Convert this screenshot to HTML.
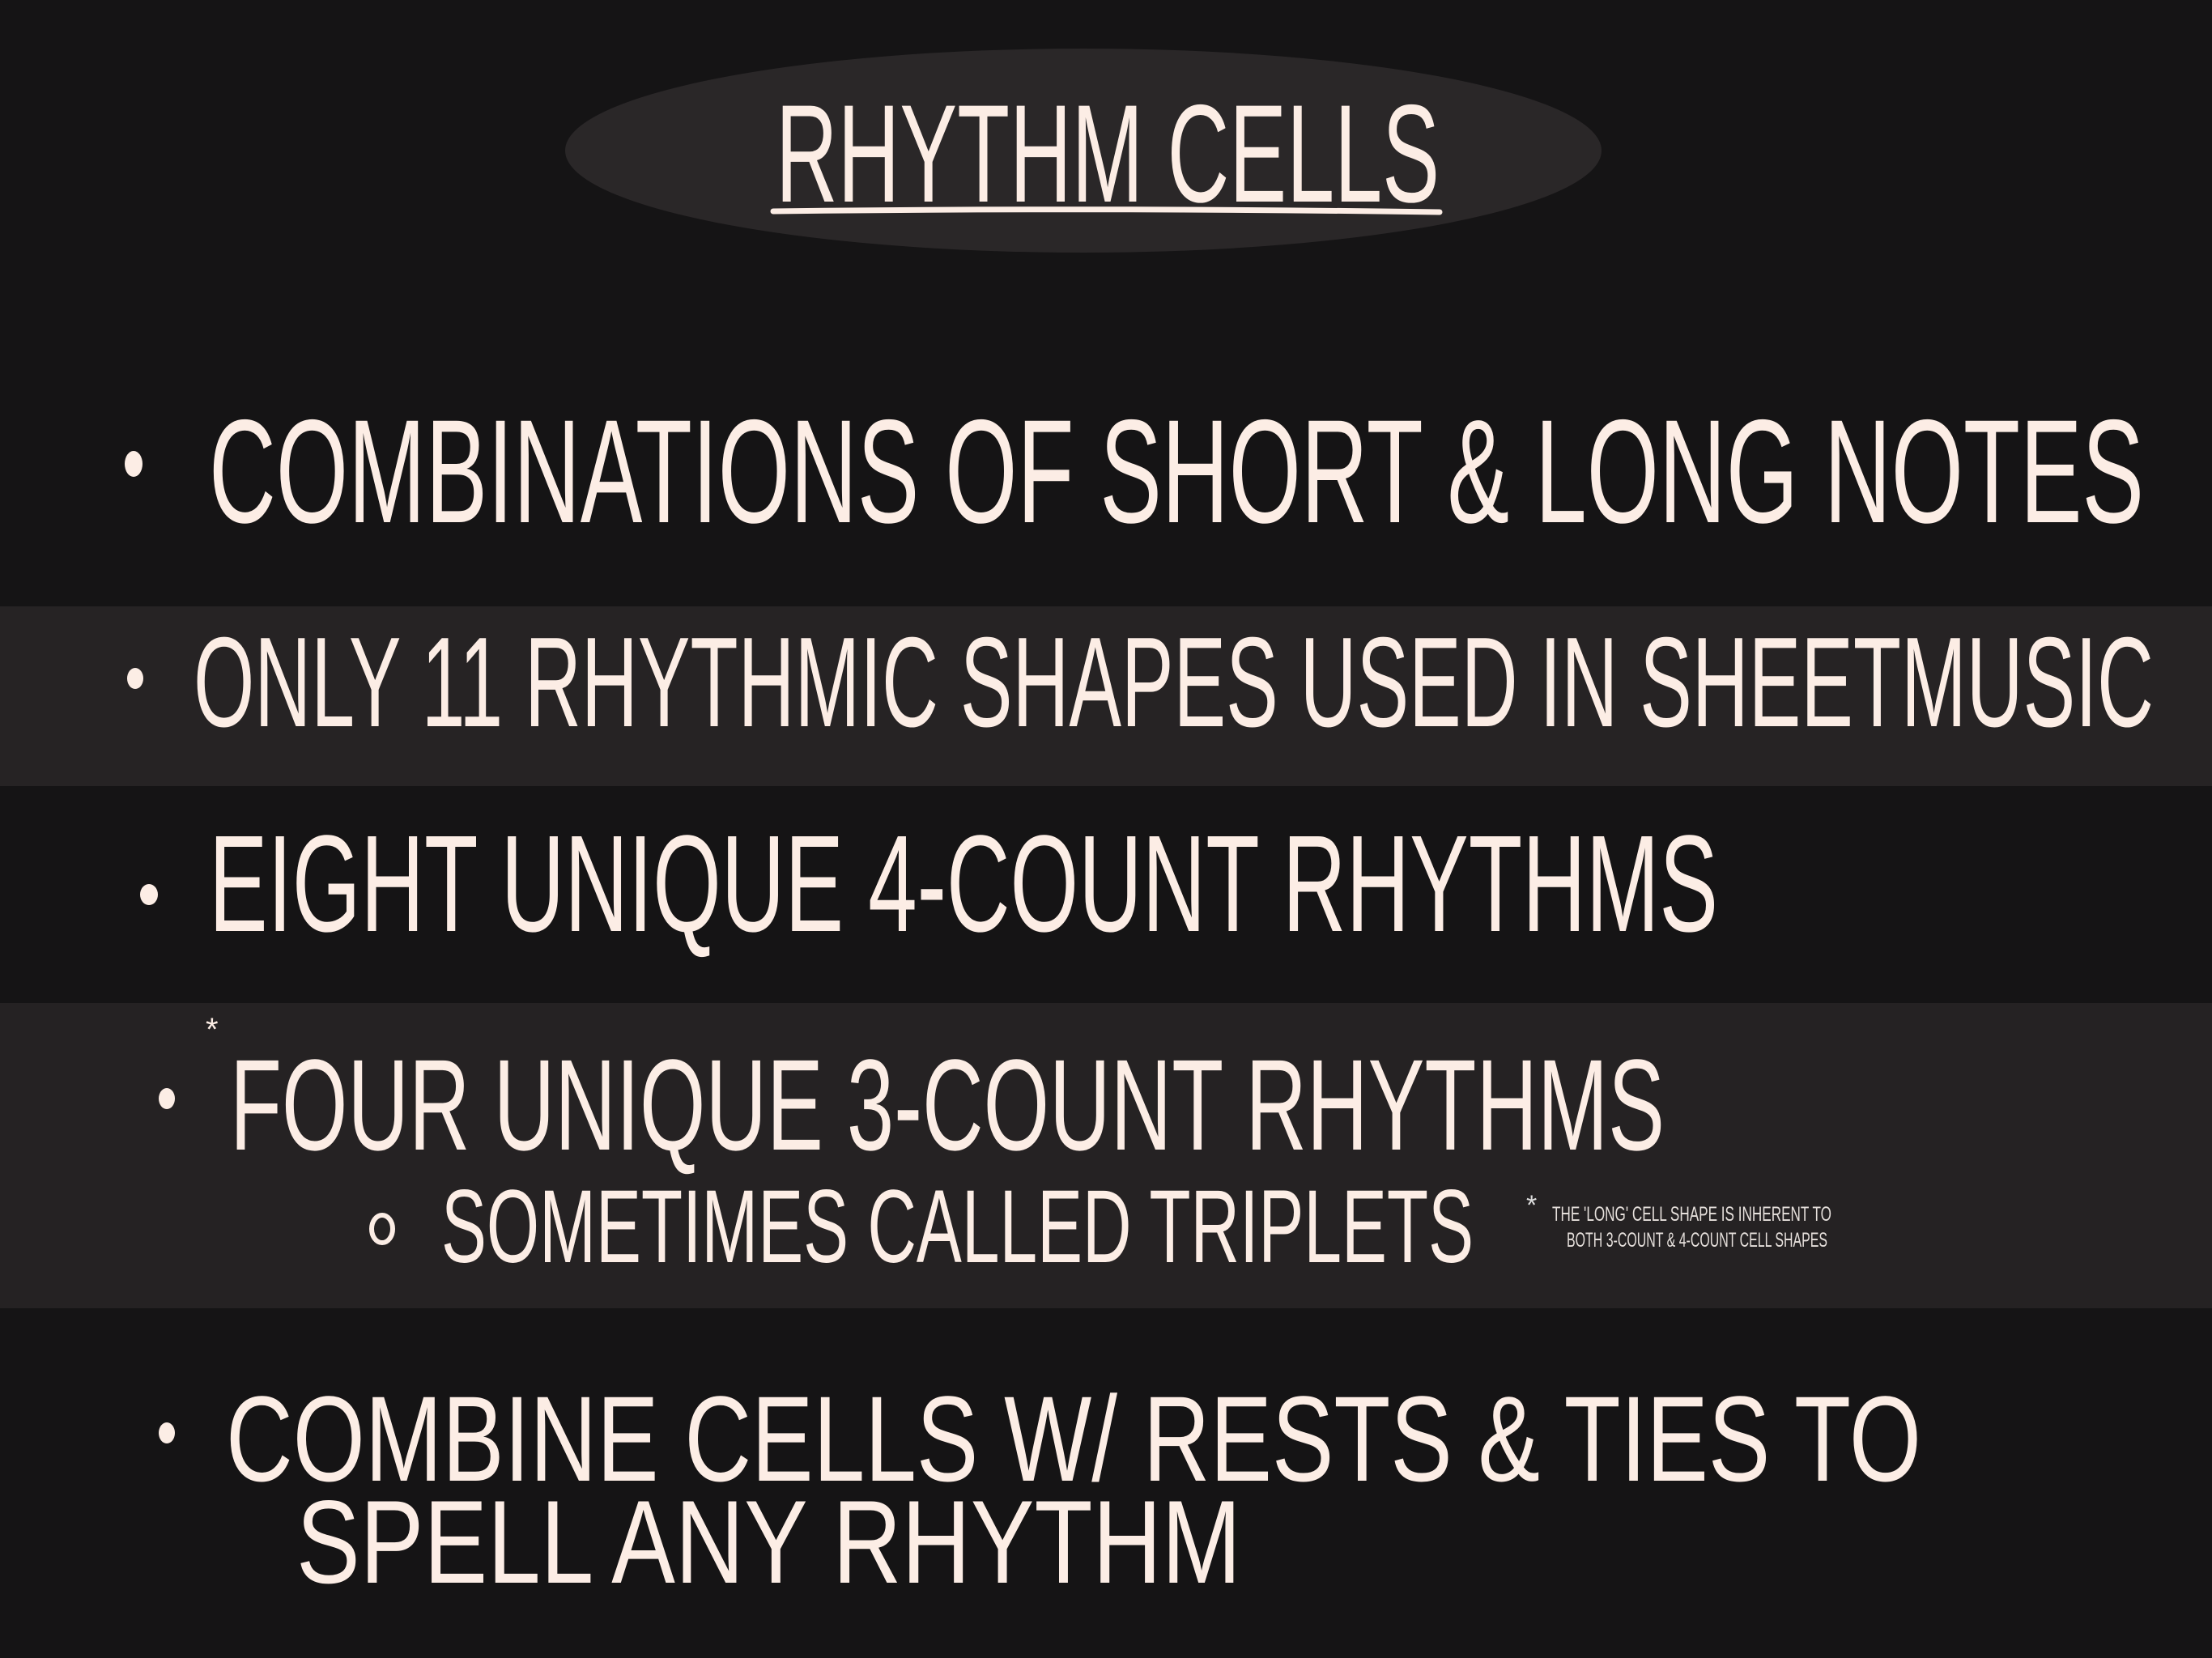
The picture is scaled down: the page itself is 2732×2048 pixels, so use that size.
<!DOCTYPE html>
<html><head><meta charset="utf-8"><style>
html,body{margin:0;padding:0;background:#151415;}
svg{display:block}
text{font-family:"Liberation Sans",sans-serif;fill:#fcede5;}
</style></head><body>
<svg width="2732" height="2048" viewBox="0 0 2732 2048" xmlns="http://www.w3.org/2000/svg">
<rect width="2732" height="2048" fill="#151415"/>
<rect x="0" y="749" width="2732" height="222" fill="#262324"/>
<rect x="0" y="1239" width="2732" height="377" fill="#252223"/>
<ellipse cx="1338" cy="186" rx="640" ry="126" fill="#2a2728"/>
<text x="958" y="249" font-size="172" textLength="820" lengthAdjust="spacingAndGlyphs">RHYTHM CELLS</text>
<path d="M955 261 Q1360 256 1778 262" stroke="#fcede5" stroke-width="7" fill="none" stroke-linecap="round"/>
<ellipse cx="165" cy="573" rx="11" ry="16" fill="#fcede5"/>
<text x="258" y="645" font-size="182" textLength="2390" lengthAdjust="spacingAndGlyphs">COMBINATIONS OF SHORT &amp; LONG NOTES</text>
<ellipse cx="167" cy="838" rx="10" ry="13" fill="#fcede5"/>
<text x="239" y="897" font-size="158" textLength="2421" lengthAdjust="spacingAndGlyphs">ONLY 11 RHYTHMIC SHAPES USED IN SHEETMUSIC</text>
<ellipse cx="184" cy="1105" rx="11" ry="13" fill="#fcede5"/>
<text x="258" y="1150" font-size="170" textLength="1864" lengthAdjust="spacingAndGlyphs">EIGHT UNIQUE 4-COUNT RHYTHMS</text>
<text x="254" y="1285" font-size="40" fill="#fcede5">*</text>
<ellipse cx="206" cy="1357" rx="10" ry="13" fill="#fcede5"/>
<text x="284" y="1420" font-size="160" textLength="1772" lengthAdjust="spacingAndGlyphs">FOUR UNIQUE 3-COUNT RHYTHMS</text>
<ellipse cx="472" cy="1518" rx="13" ry="17" fill="none" stroke="#fcede5" stroke-width="6"/>
<text x="545" y="1559" font-size="128" textLength="1275" lengthAdjust="spacingAndGlyphs">SOMETIMES CALLED TRIPLETS</text>
<text x="1885" y="1500" font-size="34" style="fill:#ddd">*</text>
<text x="1917" y="1508" font-size="25" textLength="345" lengthAdjust="spacingAndGlyphs" style="fill:#e6e0dc">THE 'LONG' CELL SHAPE IS INHERENT TO</text>
<text x="1935" y="1540" font-size="25" textLength="322" lengthAdjust="spacingAndGlyphs" style="fill:#e6e0dc">BOTH 3-COUNT &amp; 4-COUNT CELL SHAPES</text>
<ellipse cx="206" cy="1770" rx="10" ry="13" fill="#fcede5"/>
<text x="279" y="1829" font-size="150" textLength="2094" lengthAdjust="spacingAndGlyphs">COMBINE CELLS W/ RESTS &amp; TIES TO</text>
<text x="366" y="1955" font-size="146" textLength="1167" lengthAdjust="spacingAndGlyphs">SPELL ANY RHYTHM</text>
</svg>
</body></html>
